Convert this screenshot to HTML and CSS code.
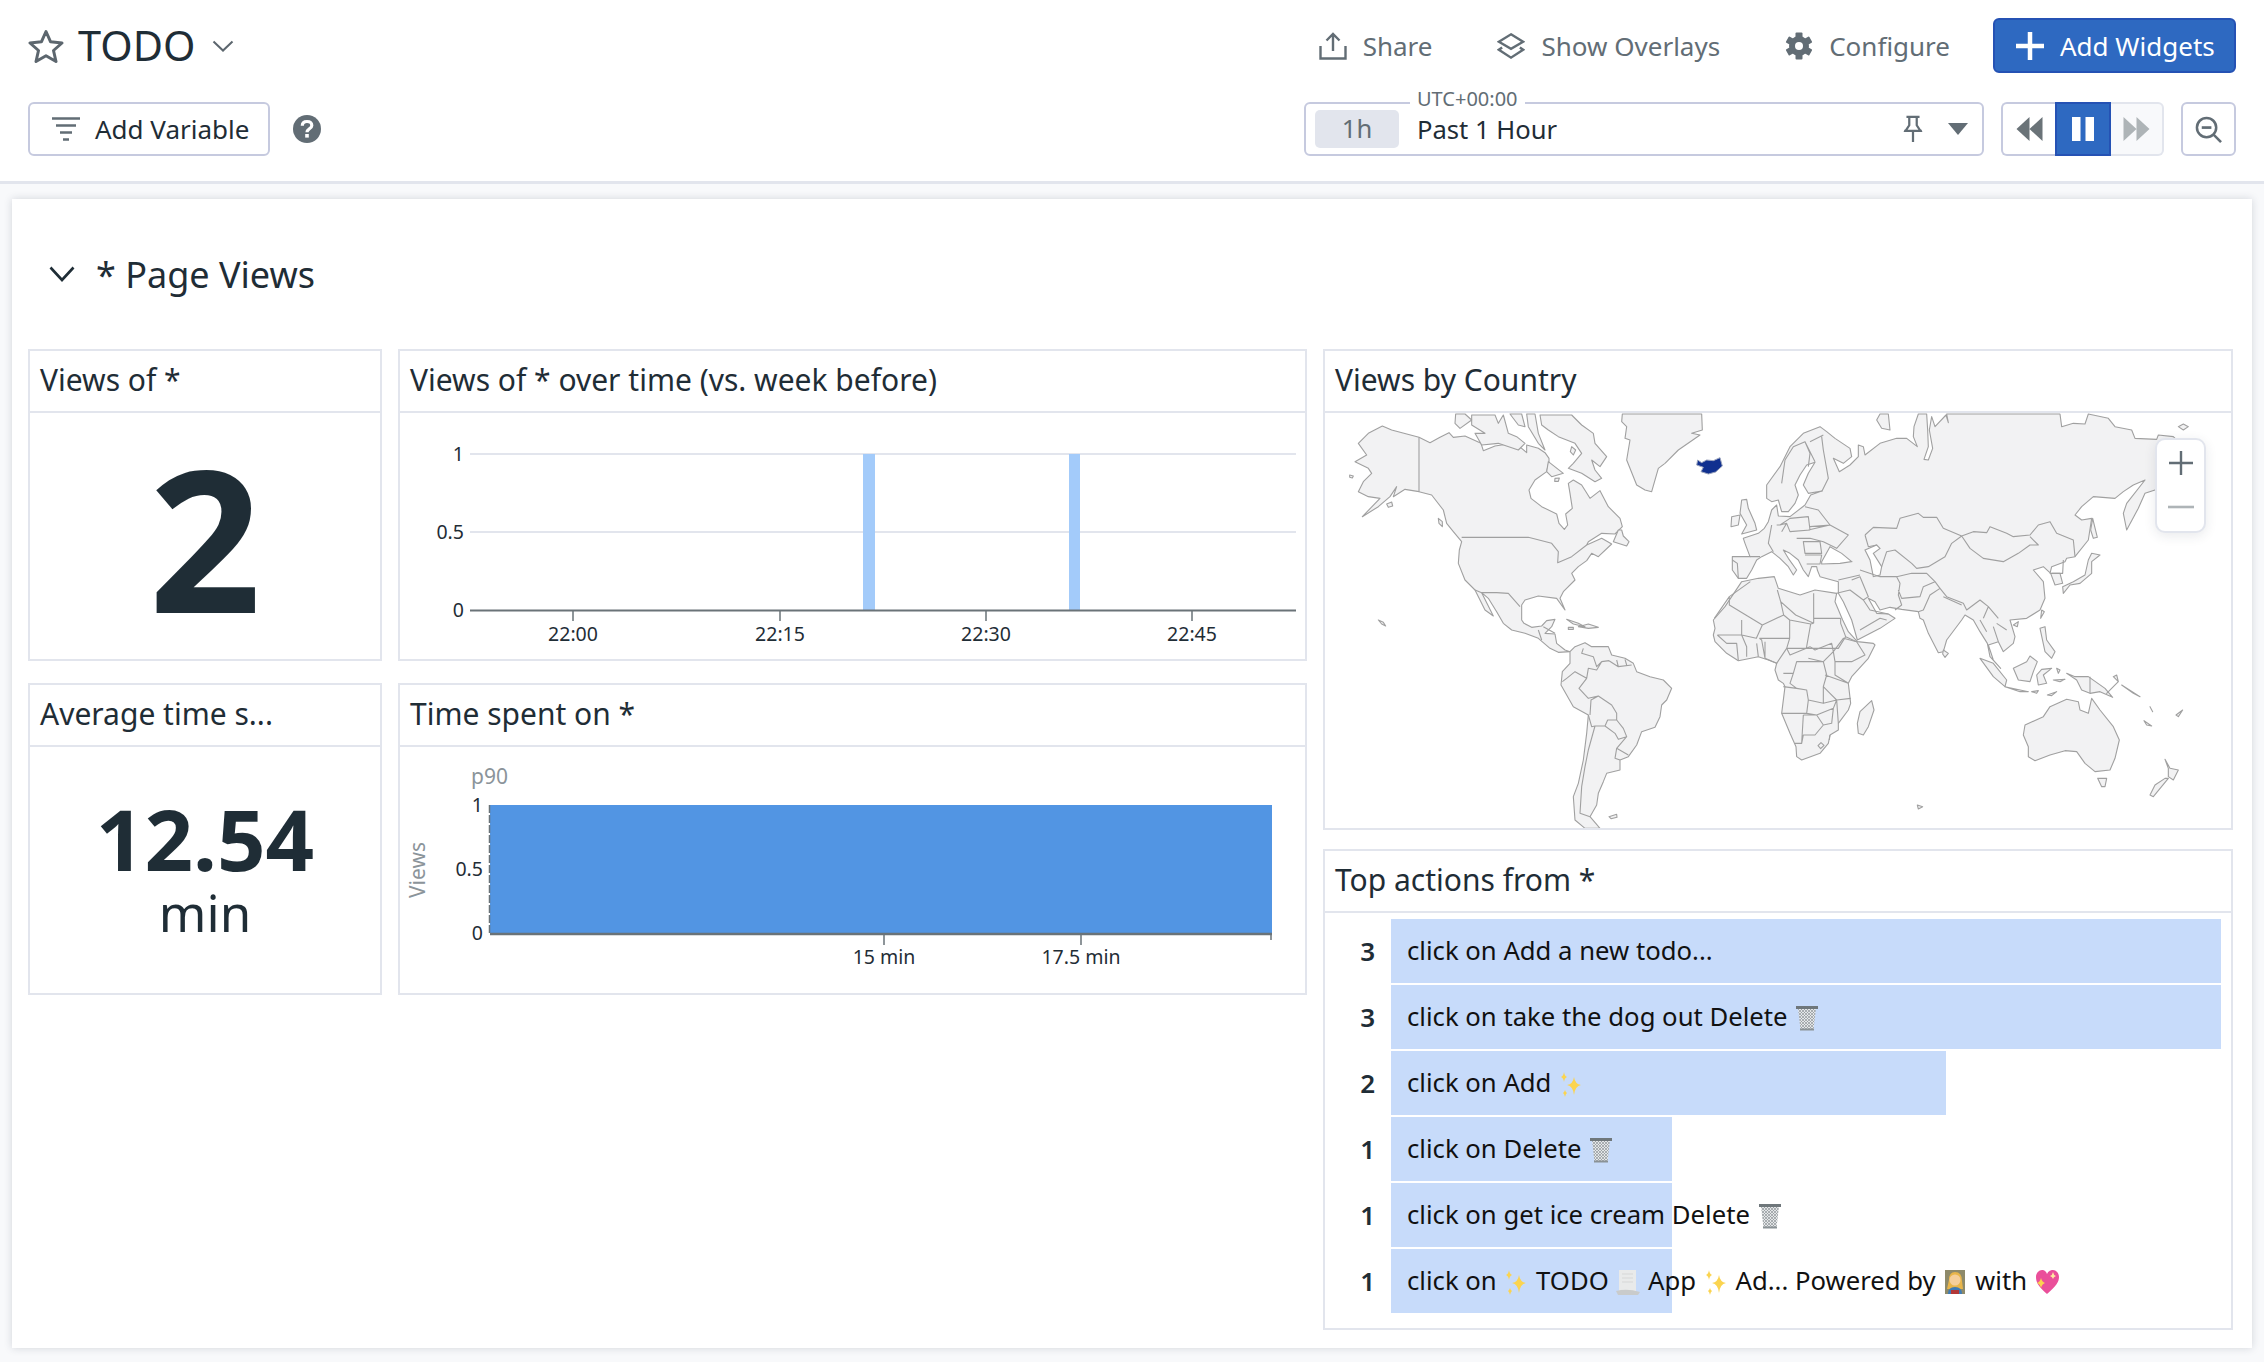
FILE: index.html
```html
<!DOCTYPE html>
<html lang="en">
<head>
<meta charset="utf-8">
<title>TODO</title>
<link rel="stylesheet" href="styles.css">
</head>
<body>
<svg class="defs" width="0" height="0" aria-hidden="true">
  <defs>
    <pattern id="mesh" width="3" height="3" patternUnits="userSpaceOnUse"><rect width="3" height="3" fill="#e4e6e8"/><path d="M0 0L3 3M3 0L0 3" stroke="#8f9699" stroke-width=".7"/></pattern>
    <symbol id="trash" viewBox="0 0 26 26"><path d="M4 3L6.500 25H19.500L22 3Z" fill="url(#mesh)"/><path d="M2 2.500H24" stroke="#6f777b" stroke-width="3"/><path d="M6 24.500H20" stroke="#8a9296" stroke-width="2"/></symbol>
    <symbol id="spark" viewBox="0 0 26 26"><path id="s1" d="M16 6Q17 13 23 14Q17 15 16 24Q15 15 9 14Q15 13 16 6Z" fill="#fbd44f"/><path d="M6 1Q6.500 5 9 6Q6.500 7 6 11Q5.500 7 3 6Q5.500 5 6 1Z" fill="#fbd44f"/><path d="M7 19Q7.500 21 9 22Q7.500 23 7 26Q6.500 23 5 22Q6.500 21 7 19Z" fill="#fbd44f"/></symbol>
    <symbol id="scroll" viewBox="0 0 26 26"><path d="M4 1H21V22H4Z" fill="#e9eaea"/><path d="M1 22Q12 19 25 23L23 26H3Z" fill="#c9cbcb"/><path d="M7 5H18M7 9H18M7 13H18" stroke="#d6d7d7"/></symbol>
    <symbol id="woman" viewBox="0 0 26 26"><rect x="3" y="1" width="20" height="24" fill="#8e8a6a"/><path d="M7 11Q7 3 13 3Q20 3 20 12L21 20H5Z" fill="#e8b54a"/><circle cx="13" cy="11" r="5.500" fill="#f6cf9a"/><path d="M6 25Q6 18 13 18Q20 18 20 25Z" fill="#3f7bb6"/><rect x="9" y="21" width="8" height="4" fill="#b23838"/></symbol>
    <symbol id="heart" viewBox="0 0 26 26"><path d="M13 25C4 17 2 13 2 8C2 4 5 1 8 1C10 1 12 2 13 5C14 2 17 1 19 1C22 1 25 4 25 8C25 13 22 17 13 25Z" fill="#ea4f9a"/><path d="M7 9Q8 13 11 14Q8 15 7 19Q6 15 3 14Q6 13 7 9Z" fill="#fbd44f"/><path d="M19 3Q19.500 6 22 7Q19.500 8 19 10Q18.500 8 16 7Q18.500 6 19 3Z" fill="#ffe9a0"/></symbol>
  </defs>
</svg>

<header class="topbar">
  <div class="toprow">
    <div class="titlegroup">
      <svg class="ico-star" viewBox="0 0 36 34"><path d="M18 2.500L22.600 12.800L34 14L25.500 21.500L28 32.500L18 26.800L8 32.500L10.500 21.500L2 14L13.400 12.800Z" fill="none" stroke="#5c666e" stroke-width="3" stroke-linejoin="round"/></svg>
      <h1 class="dashname">TODO</h1>
      <svg class="ico-chev" viewBox="0 0 22 12"><path d="M1.500 1.500L11 10.500L20.500 1.500" fill="none" stroke="#5c666e" stroke-width="2"/></svg>
    </div>
    <div class="actions">
      <div class="action">
        <svg class="ico" viewBox="0 0 28 28"><path d="M14 19V2M7.500 8.500L14 2L20.500 8.500M1.500 14V26.500H26.500V14" fill="none" stroke="#626d75" stroke-width="2.400"/></svg>
        <span>Share</span>
      </div>
      <div class="action gap-l">
        <svg class="ico" viewBox="0 0 30 28"><path d="M15 1.500L28 9.500L15 17L2 9.500Z" fill="none" stroke="#626d75" stroke-width="2.600"/><path d="M5.500 15.500L2 18L15 26.500L28 18L24.500 15.500" fill="none" stroke="#626d75" stroke-width="2.600"/></svg>
        <span>Show Overlays</span>
      </div>
      <div class="action gap-l">
        <svg class="ico" viewBox="0 0 28 28"><g fill="#626d75" transform="translate(14 14)"><circle r="10"/><rect x="-3.500" y="-13.500" width="7" height="27" rx="1"/><rect x="-3.500" y="-13.500" width="7" height="27" rx="1" transform="rotate(60)"/><rect x="-3.500" y="-13.500" width="7" height="27" rx="1" transform="rotate(120)"/></g><circle cx="14" cy="14" r="4" fill="#fff"/></svg>
        <span>Configure</span>
      </div>
      <button class="btn-primary" type="button">
        <svg class="ico-plus" viewBox="0 0 28 28"><path d="M14 0V28M0 14H28" stroke="#fff" stroke-width="4.500"/></svg>
        <span>Add Widgets</span>
      </button>
    </div>
  </div>
  <div class="toprow second">
    <div class="vargroup">
      <button class="btn-outline" type="button">
        <svg class="ico-filter" viewBox="0 0 28 24"><path d="M0 1.500H28M4 8.500H24M8 15.500H20M11 22.500H17" stroke="#626d75" stroke-width="2.400"/></svg>
        <span>Add Variable</span>
      </button>
      <svg class="ico-help" viewBox="0 0 28 28"><circle cx="14" cy="14" r="14" fill="#626d75"/><path d="M9.300 10.800C9.300 8 11.300 6.500 14 6.500C16.800 6.500 18.800 8 18.800 10.500C18.800 13.800 14 13.800 14 17.200" fill="none" stroke="#fff" stroke-width="3.200"/><rect x="12.200" y="19" width="3.600" height="3.600" fill="#fff"/></svg>
    </div>
    <div class="timegroup">
      <div class="picker">
        <span class="utc">UTC+00:00</span>
        <span class="chip">1h</span>
        <span class="range">Past 1 Hour</span>
        <svg class="ico-pin" viewBox="0 0 24 30"><path d="M5 2H19M8 2V11L4 17H20L16 11V2M12 17V29M2.500 17H21.500" fill="none" stroke="#626d75" stroke-width="2.400"/></svg>
        <svg class="ico-caret" viewBox="0 0 20 12"><path d="M0 0H20L10 12Z" fill="#626d75"/></svg>
      </div>
      <div class="playback">
        <span class="pb pb-back"><svg viewBox="0 0 26 26"><path d="M13 1V25L0 13ZM26 1V25L13 13Z" fill="#6a7378"/></svg></span>
        <span class="pb pb-pause"><svg viewBox="0 0 24 26"><path d="M1 1H9.500V25H1ZM14.500 1H23V25H14.500Z" fill="#fff"/></svg></span>
        <span class="pb pb-fwd"><svg viewBox="0 0 26 26"><path d="M0 1L13 13L0 25ZM13 1L26 13L13 25Z" fill="#aeb4b7"/></svg></span>
      </div>
      <span class="zoomout"><svg viewBox="0 0 28 28"><circle cx="12" cy="12" r="10" fill="none" stroke="#626d75" stroke-width="2.600"/><path d="M7 12H17" stroke="#626d75" stroke-width="2.800"/><path d="M19 19L27 27" stroke="#626d75" stroke-width="2.600"/></svg></span>
    </div>
  </div>
</header>

<main class="board">
  <div class="section-head">
    <svg class="ico-sec" viewBox="0 0 26 16"><path d="M1.500 1.500L13 14L24.500 1.500" fill="none" stroke="#1f2d36" stroke-width="2.600"/></svg>
    <h2>* Page Views</h2>
  </div>
  <div class="grid">
    <div class="leftgrid">
      <section class="widget">
        <h3 class="wtitle">Views of *</h3>
        <div class="wbody center"><span class="bignum">2</span></div>
      </section>
      <section class="widget">
        <h3 class="wtitle">Views of * over time (vs. week before)</h3>
        <div class="wbody">
          <svg class="chart" viewBox="0 0 905 246">
            <g class="grid-l"><path d="M70 41H896M70 119H896"/></g>
            <rect x="463" y="41" width="12" height="156" fill="#a3cbfa"/>
            <rect x="669" y="41" width="11" height="156" fill="#a3cbfa"/>
            <path d="M70 197.500H896" stroke="#6a7378" stroke-width="2"/>
            <path d="M173 198V208M380 198V208M586 198V208M792 198V208" stroke="#6a7378" stroke-width="1.500"/>
            <g class="tick" text-anchor="end"><text x="64" y="48">1</text><text x="64" y="126">0.5</text><text x="64" y="204">0</text></g>
            <g class="tick" text-anchor="middle"><text x="173" y="228">22:00</text><text x="380" y="228">22:15</text><text x="586" y="228">22:30</text><text x="792" y="228">22:45</text></g>
          </svg>
        </div>
      </section>
      <section class="widget">
        <h3 class="wtitle">Average time s...</h3>
        <div class="wbody numcol"><span class="midnum">12.54</span><span class="unit">min</span></div>
      </section>
      <section class="widget">
        <h3 class="wtitle">Time spent on *</h3>
        <div class="wbody">
          <svg class="chart" viewBox="0 0 905 246">
            <rect x="90" y="58" width="782" height="128" fill="#5295e3"/>
            <path d="M89.500 58V188" stroke="#6a7378" stroke-width="1.500" stroke-dasharray="8 2"/>
            <path d="M90 187H872" stroke="#6a7378" stroke-width="2.500"/>
            <path d="M484 188V198M681 188V198M871 188V193" stroke="#6a7378" stroke-width="1.500"/>
            <text class="tick muted big" x="71" y="37">p90</text>
            <g class="tick" text-anchor="end"><text x="83" y="65">1</text><text x="83" y="129">0.5</text><text x="83" y="193">0</text></g>
            <g class="tick" text-anchor="middle"><text x="484" y="217">15 min</text><text x="681" y="217">17.5 min</text></g>
            <text class="tick muted big" text-anchor="middle" transform="translate(25 123) rotate(-90)">Views</text>
          </svg>
        </div>
      </section>
    </div>
    <div class="rightcol">
      <section class="widget fill">
        <h3 class="wtitle">Views by Country</h3>
        <div class="wbody mapbody">
          <svg class="map" viewBox="0 9 2718 1245" preserveAspectRatio="none">
            <g class="land">
              <path d="M100 100L130 70 172 48 200 60 282 82 315 98 345 82 372 68 385 82 420 78 468 100 475 122 510 108 560 100 590 115 605 128 605 105 640 115 660 128 672 145 672 155 665 185 630 210 612 240 618 265 650 290 695 312 702 340 718 358 728 345 722 312 742 295 735 250 730 220 745 210 770 225 795 265 825 242 850 290 885 325 892 350 870 372 830 370 790 395 785 405 830 385 860 402 820 440 800 430 785 452 760 470 740 490 750 510 715 545 705 565 720 600 695 565 640 558 600 570 590 585 590 630 597 640 620 652 650 648 665 632 690 628 680 650 660 670 690 672 695 700 720 720 735 725 700 727 675 715 640 685 600 670 560 660 535 640 515 605 490 565 470 548 505 618 480 600 450 540 420 510 400 460 403 420 410 395 385 365 365 340 355 300 320 255 282 245 240 238 205 260 215 230 195 260 160 290 112 320 165 265 130 260 100 245 115 215 140 190 130 175 90 155 125 135Z"/>
              <path d="M645 15H740L770 45 805 70 810 100 845 140 825 170 800 150 810 180 830 205 810 215 770 190 730 175 745 160 770 130 750 100 700 80 670 60 650 45Z"/>
              <path d="M440 15H510L520 40 535 15 550 70 575 80 600 100 580 120 520 100 470 105 450 70 480 70 440 45Z"/>
              <path d="M392 12H420L440 30 405 55 390 40Z"/>
              <path d="M555 12H590L600 50 580 45Z"/>
              <path d="M605 12H630L640 70 660 120 640 100 610 50Z"/>
              <path d="M670 155L715 190 680 200 665 185Z"/>
              <path d="M690 205L703 204 700 214 689 214Z"/>
              <path d="M740 110L752 120 745 135 736 125Z"/>
              <path d="M892 12H1130L1132 60 1100 70 1125 75 1060 120 1020 160 1000 175 980 245 960 240 935 225 905 150 915 90 900 85 905 50 890 35Z"/>
              <path d="M865 395L880 360 890 360 895 378 912 395 905 408Z"/>
              <path d="M340 325L352 335 352 350 342 340Z"/>
              <path d="M185 282L200 276 203 288 190 292Z"/>
              <path d="M74 195L85 198 82 204 74 202Z"/>
              <path d="M725 628L760 640 780 650 745 642ZM760 650L790 642 820 652 790 655ZM730 652H745V658H730Z"/>
              <path d="M160 630L175 637 182 648 170 642Z"/>
              <path d="M1250 270L1265 268 1270 295 1290 340 1295 360 1250 372 1265 345 1245 310Z"/>
              <path d="M1220 320L1245 315 1240 345 1218 350Z"/>
            </g>
            <path class="iceland" d="M1118 150L1130 158 1145 150 1165 152 1185 143 1192 168 1172 186 1150 192 1128 185 1135 172 1115 165Z"/>
            <g class="border">
              <path d="M282 82V245M410 382H610L680 400 700 425 698 458 740 440 785 405M450 540L470 548 515 548 550 550 585 590M640 660L650 690M655 650L690 670"/>
            </g>
            <g transform="translate(0 630)">
              <g class="land">
                <path d="M735 95L750 80 780 68 800 80 850 80 860 105 900 115 925 130 935 155 975 170 1015 180 1040 205 1025 240 1010 255 1005 290 990 322 950 335 935 375 910 410 885 420 885 450 845 460 835 485 820 520 815 555 795 590 825 625 780 625 750 600 745 530 760 490 775 420 785 340 790 285 745 260 708 195 712 155 735 130Z"/>
                <path d="M852 590L875 583 876 592 858 596Z"/>
              </g>
              <g class="border">
                <path d="M712 185L725 175 750 155 785 175M785 175L762 205 790 235 820 228 798 240 795 285M785 175L790 145 815 150 830 125 852 122M775 85L770 100 805 110 815 140 830 125M852 122L880 140 920 135M875 120L880 140M900 118L905 135M820 228L860 255 875 280 875 300 848 300 840 318 810 318 800 320 790 285M848 300L840 318 870 340 880 358 905 350 895 325 875 300M810 318L790 390 780 440 770 500 765 580 795 590M905 350L875 385 910 405M875 385L870 415 885 420M870 340L880 358"/>
              </g>
            </g>
            <g transform="translate(1365 0)">
              <g class="land">
                <path d="M-143 480L-143 440 -90 440 -105 400 -110 385 -65 370 -47 355 -35 335 -25 300 -10 285 -5 318 30 320 75 285 92 255 125 243 85 250 70 225 85 190 105 157 80 165 60 195 45 225 55 255 45 280 25 305 5 305 -5 270 -25 275 -40 265 -40 225 0 170 30 110 70 70 120 50 140 65 165 85 210 115 215 140 190 160 160 145 178 185 210 165 235 140 235 105 250 110 255 135 300 100 350 85 380 85 412 110 400 80 402 50 415 12 440 12 443 60 445 110 432 148 445 150 458 115 448 60 455 20 465 50 498 15 505 38 500 12H840L845 50 880 40 915 42 925 12 985 25 1005 50 1055 60 1065 85 1130 88 1135 75 1180 80 1200 100 1200 160 1125 240 1095 250 1075 295 1040 360 1030 310 1040 280 1095 210 1060 225 1030 245 1005 265 940 260 905 290 885 315 905 330 935 325 925 390 885 440 860 445 855 455 815 470 810 490 840 490 848 520 825 525 812 490 790 470 760 480 790 515 795 565 780 600 740 625 690 630 705 680 700 700 670 725 655 695 625 705 640 750 662 775 630 740 622 700 600 665 580 630 555 615 545 630 500 690 490 725 475 728 445 670 430 630 420 625 415 605 365 598 330 592 300 600 285 575 265 565 290 610 325 612 345 625 300 655 232 690 215 630 190 575 175 550 175 515 120 500 112 480 110 470 95 470 85 500 70 480 55 450 30 430 10 420 25 445 50 480 40 495 25 470 0 445 -25 425 -55 440 -70 450 -85 480 -100 505 -125 505Z"/>
                <path d="M-115 515L-65 505 -17 500 -5 535 60 555 105 540 170 550 165 575 188 630 205 665 232 695 280 700 285 705 265 745 215 800 205 820 212 880 205 900 175 940 175 960 150 975 145 1000 120 1030 65 1050 50 1040 48 1010 30 970 5 910 15 830 10 820 -5 810 -15 780 -10 760 -35 750 -65 740 -125 752 -160 730 -195 695 -200 675 -195 655 -200 630 -165 590Z"/>
                <path d="M275 872L282 900 265 950 250 975 235 970 232 940 240 905Z"/>
                <path d="M290 30L300 12H325L330 60 305 55Z"/>
                <path d="M938 325L952 382 940 385 932 360Z"/>
                <path d="M935 430L960 435 935 455 935 490 900 520 870 525 850 550 848 530 880 515 915 495 925 450Z"/>
                <path d="M785 600L793 605 782 625Z"/>
                <path d="M1195 50L1210 42 1225 50 1210 60Z"/>
                <path d="M490 720L505 730 495 742 488 732Z"/>
                <path d="M700 645L715 635 712 650Z"/>
                <path d="M780 655L795 650 800 690 825 725 815 745 795 725Z"/>
                <path d="M600 745L640 760 680 810 675 830 640 800Z"/>
                <path d="M675 830L745 845 720 845Z"/>
                <path d="M700 775L740 755 750 738 772 755 760 785 750 815 715 810Z"/>
                <path d="M770 795L785 778 815 775 790 795 800 820 775 825Z"/>
                <path d="M860 790L885 800 925 800 975 835 998 862 960 845 930 850 905 840 890 810Z"/>
                <path d="M755 845L775 842 770 850ZM802 855L830 845 815 857ZM820 810L855 808 840 815ZM830 775L840 780 835 790ZM1025 825L1080 860 1060 850ZM1110 890L1118 905ZM1188 915L1208 900 1195 920ZM1092 932L1115 948 1100 945ZM980 850L1015 815 1000 800 1010 795 1015 815Z"/>
                <path d="M735 945L790 920 810 890 860 868 895 875 900 900 925 910 935 865 960 900 1000 950 1018 990 1005 1045 990 1080 945 1085 915 1060 890 1025 855 1022 810 1035 765 1052 745 1040 745 1010 730 975Z"/>
                <path d="M953 1105L980 1105 975 1130 965 1130Z"/>
                <path d="M1155 1048L1170 1075 1195 1080 1180 1110 1165 1100 1165 1075Z"/>
                <path d="M1165 1105L1120 1160 1110 1155 1125 1125 1155 1105Z"/>
                <path d="M412 1185L428 1190 415 1197Z"/>
                <path d="M123 998L132 1006 122 1016 114 1007Z"/>
              </g>
              <g class="sea">
                <path d="M125 455L150 410 185 430 215 455 180 460 125 462Z"/>
                <path d="M255 420L290 405 300 415 280 430 305 470 300 495 280 500 270 450Z"/>
              </g>
              <g class="border">
                <path d="M255 375L280 352 350 355 360 325 415 310 430 322 470 322 490 355 545 378 580 365 620 368 630 350 680 370 700 380 750 375 775 345 810 335 830 370 880 390 885 440M545 378L570 415 610 445 670 455 715 430 750 405 775 405 750 380M545 378L515 400 495 440 445 470M255 375L265 410 290 405M305 470L320 425 345 420 395 460 410 475 445 470M240 480L300 500 350 500 360 520 355 555 365 585 345 600M350 500L395 490 440 490 465 515 430 530 420 560 365 565 355 540M465 515L480 535 450 555 430 600 415 605M480 535L500 560 550 580 560 600 600 570 625 590 610 625M490 560L545 585M625 590L655 625M815 490L848 490 850 450"/>
                <path d="M0 345L30 325 85 320 90 360 30 365 20 340ZM85 360L150 345 205 375 170 415 130 395 90 385 50 385M75 290L115 300 150 345 90 350M70 395L120 395 125 430 75 430ZM75 435H125L120 462 80 462M-10 345L0 345M-25 345L-35 400 -20 425M-90 440L-60 440M5 365L20 340M-143 450L-128 460 -125 505M5 220L15 150 40 110 75 95 90 130 85 170M75 95L105 155M90 95L130 75M125 80L130 120 145 205 125 245"/>
                <path d="M175 510L240 495M215 510L240 500 265 560 250 570 210 540 170 550M210 540L250 570 270 600 325 612M240 660L300 625 320 630"/>
                <path d="M101 625H182M101 550V640M-8 540L2 575 47 615 101 640M-89 515L-152 560 -197 625M-152 560V585L-53 645 11 615 2 575M-115 630V675H-188M-53 645L-71 685 -115 675M11 615L29 630V685H-62M29 630L92 642 79 715 20 715 29 685M92 642L101 640M182 625V640L197 680 175 715 79 715M197 680L230 695M-188 675L-160 700-130 700-125 752M-115 675L-100 710-100 740M-70 700L-65 740M-45 695V745M-62 685L-55 690-45 745-10 760M20 715L-10 760"/>
                <path d="M160 725L190 685 230 695 255 735 215 755 165 755ZM90 710L105 720 155 700 160 725 130 755 85 745M20 715L30 735 90 710M50 755H130L140 795 130 830V880L85 870 80 840 50 835 30 820 40 790ZM165 755V795L205 820M135 795L205 820M130 830L150 850 170 870 212 865M10 830L50 835 80 840 85 870 80 910 5 910M85 870L130 880 170 870 160 895 110 915 80 910M70 915L65 1000 45 1000M70 915H110L130 945 105 975 70 975 65 1000M160 895L155 940 130 945M170 870L175 940M150 975L148 990M40 790H10"/>
                <path d="M930 800V850"/>
                <path d="M600 630L620 665M640 650L655 695M650 640L680 660"/>
              </g>
            </g>
          </svg>
          <div class="mapzoom">
            <svg class="mz" viewBox="0 0 26 26"><path d="M13 1V25M1 13H25" stroke="#626d75" stroke-width="2.400"/></svg>
            <svg class="mz mz-min" viewBox="0 0 26 4"><path d="M0 2H26" stroke="#aeb4b7" stroke-width="2.600"/></svg>
          </div>
        </div>
      </section>
      <section class="widget fill">
        <h3 class="wtitle">Top actions from *</h3>
        <div class="wbody toplist">
          <div class="row"><span class="val">3</span><div class="track"><span class="fillbar" style="width:100%"></span><span class="lab">click on Add a new todo...</span></div></div>
          <div class="row"><span class="val">3</span><div class="track"><span class="fillbar" style="width:100%"></span><span class="lab">click on take the dog out Delete <svg class="emo"><use href="#trash"/></svg></span></div></div>
          <div class="row"><span class="val">2</span><div class="track"><span class="fillbar" style="width:66.9%"></span><span class="lab">click on Add <svg class="emo"><use href="#spark"/></svg></span></div></div>
          <div class="row"><span class="val">1</span><div class="track"><span class="fillbar" style="width:33.9%"></span><span class="lab">click on Delete <svg class="emo"><use href="#trash"/></svg></span></div></div>
          <div class="row"><span class="val">1</span><div class="track"><span class="fillbar" style="width:33.9%"></span><span class="lab">click on get ice cream Delete <svg class="emo"><use href="#trash"/></svg></span></div></div>
          <div class="row"><span class="val">1</span><div class="track"><span class="fillbar" style="width:33.9%"></span><span class="lab">click on <svg class="emo"><use href="#spark"/></svg> TODO <svg class="emo"><use href="#scroll"/></svg> App <svg class="emo"><use href="#spark"/></svg> Ad... Powered by <svg class="emo"><use href="#woman"/></svg> with <svg class="emo"><use href="#heart"/></svg></span></div></div>
        </div>
      </section>
    </div>
  </div>
</main>
</body>
</html>
```
FILE: styles.css
```css
* { box-sizing: border-box; }
html, body { margin: 0; height: 100%; }
body {
  background: #f8f9fb;
  color: #1f2d36;
  font-family: "Noto Sans", "Open Sans", sans-serif;
  overflow: hidden;
}
.defs { position: absolute; }
svg { display: block; flex: none; }

.topbar {
  height: 184px;
  padding: 18px 28px 0;
  background: #fff;
  border-bottom: 3px solid #e2e5ed;
}
.toprow { display: flex; justify-content: space-between; align-items: center; height: 55px; }
.toprow.second { margin-top: 29px; height: 54px; }
.titlegroup { display: flex; align-items: center; }
.ico-star { width: 36px; height: 34px; }
.dashname { margin: 0 0 0 14px; font-size: 41.500px; font-weight: 400; line-height: 55px; }
.ico-chev { width: 22px; height: 12px; margin-left: 17px; }
.actions { display: flex; align-items: center; }
.action { display: flex; align-items: center; gap: 16px; font-size: 26px; color: #626d75; }
.gap-l { margin-left: 65px; }
.ico { width: 28px; height: 28px; }
.btn-primary {
  display: flex; align-items: center; gap: 16px;
  height: 55px; width: 243px; margin-left: 43px; padding: 0 0 0 21px;
  background: #2e69c1; border: 2px solid #2552b4; border-radius: 6px;
  color: #fff; font: 400 26px "Noto Sans", sans-serif;
}
.ico-plus { width: 28px; height: 28px; }
.vargroup { display: flex; align-items: center; gap: 23px; }
.btn-outline {
  display: flex; align-items: center; gap: 15px;
  height: 54px; width: 242px; padding: 0 0 0 22px;
  background: #fff; border: 2px solid #c6cadf; border-radius: 6px;
  color: #1f2d36; font: 400 26px "Noto Sans", sans-serif;
}
.ico-filter { width: 28px; height: 24px; }
.ico-help { width: 28px; height: 28px; }
.timegroup { display: flex; align-items: center; }
.picker {
  position: relative;
  display: flex; align-items: center;
  width: 680px; height: 54px; padding-left: 9px;
  border: 2px solid #c6cadf; border-radius: 6px;
  font-size: 25.600px;
}
.utc {
  position: absolute; left: 104px; top: -17px;
  padding: 0 7px; background: #fff;
  font-size: 20px; line-height: 24px; color: #626d75;
}
.chip {
  width: 84px; height: 38px; line-height: 38px; text-align: center;
  background: #e2e5ed; border-radius: 5px; color: #626d75;
}
.range { margin-left: 18px; flex: 1; }
.ico-pin { width: 24px; height: 28px; }
.ico-caret { width: 20px; height: 12px; margin: 0 14px 0 23px; }
.playback { display: flex; margin-left: 17px; height: 54px; }
.pb { display: flex; align-items: center; justify-content: center; border: 2px solid #c6cadf; }
.pb-back { width: 54px; border-right: 0; border-radius: 6px 0 0 6px; }
.pb-back svg { width: 27px; height: 26px; }
.pb-pause { width: 56px; background: #2e69c1; border-color: #2552b4; }
.pb-pause svg { width: 24px; height: 26px; }
.pb-fwd { width: 53px; background: #f8f9fb; border-color: #e2e5ed; border-left: 0; border-radius: 0 6px 6px 0; }
.pb-fwd svg { width: 27px; height: 26px; }
.zoomout {
  display: flex; align-items: center; justify-content: center;
  width: 55px; height: 54px; margin-left: 17px;
  border: 2px solid #c6cadf; border-radius: 6px;
}
.zoomout svg { width: 27px; height: 27px; }

.board {
  height: 1149px;
  margin: 15px 12px 0;
  padding: 0 19px 0 16px;
  background: #fff;
  box-shadow: 0 0 8px rgba(40, 50, 70, .18);
}
.section-head { display: flex; align-items: center; height: 150px; padding: 0 0 0 21px; }
.ico-sec { width: 26px; height: 16px; }
.section-head h2 { margin: 0 0 0 21px; font-size: 36px; font-weight: 400; }

.grid { display: flex; gap: 16px; align-items: flex-start; }
.leftgrid {
  display: grid; grid-template-columns: 354px 909px; grid-template-rows: 312px 312px;
  column-gap: 16px; row-gap: 22px;
}
.rightcol { display: flex; flex-direction: column; gap: 19px; width: 910px; }
.widget {
  display: flex; flex-direction: column;
  border: 2px solid #e2e5ed; background: #fff; min-width: 0;
}
.widget.fill { height: 481px; }
.wtitle {
  flex: none; margin: 0; height: 62px; padding: 0 0 0 10px;
  border-bottom: 2px solid #e2e5ed;
  font-size: 30px; font-weight: 400; line-height: 58px; white-space: nowrap;
}
.wbody { flex: 1; min-height: 0; }
.center { display: flex; align-items: center; justify-content: center; }
.numcol { display: flex; flex-direction: column; align-items: center; padding-top: 49px; }
.bignum { font-size: 197px; font-weight: 700; line-height: 1; }
.midnum { font-size: 85px; font-weight: 700; line-height: 85px; }
.unit { font-size: 51px; line-height: 50px; margin-top: 6px; }
.chart { width: 100%; height: 100%; }
.grid-l path { stroke: #e2e5ed; stroke-width: 2; fill: none; }
.tick { font-size: 19.500px; fill: #1f2d36; }
.tick.muted { fill: #8b949a; }
.tick.big { font-size: 21px; }

.mapbody { position: relative; }
.map { width: 100%; height: 100%; }
.land path { fill: #f2f2f3; stroke: #a0a0a0; stroke-width: 1.100px; vector-effect: non-scaling-stroke; stroke-linejoin: round; }
.sea path { fill: #fff; stroke: #a0a0a0; stroke-width: 1.100px; vector-effect: non-scaling-stroke; }
.border path { fill: none; stroke: #a0a0a0; stroke-width: 1.100px; vector-effect: non-scaling-stroke; stroke-linejoin: round; }
.iceland { fill: #10308f; stroke: #9aa3bd; stroke-width: 1px; vector-effect: non-scaling-stroke; }
.mapzoom {
  position: absolute; right: 25px; top: 25px;
  display: flex; flex-direction: column; align-items: center;
  width: 51px; height: 95px; padding-top: 10px;
  background: #fff; border: 2px solid #e2e5ed; border-radius: 10px;
  box-shadow: 0 3px 12px rgba(40, 50, 70, .10);
}
.mz { width: 26px; }
.mz-min { margin-top: 29px; }
.toplist { padding: 6px 10px 0 0; display: flex; flex-direction: column; gap: 2px; }
.row { display: flex; height: 64px; }
.val { width: 66px; flex: none; padding-right: 16px; text-align: right; font-size: 26px; font-weight: 600; line-height: 64px; }
.track { position: relative; flex: 1; }
.fillbar { position: absolute; left: 0; top: 0; bottom: 0; background: #c7dbfa; }
.lab { position: relative; display: block; height: 64px; padding-left: 16px; font-size: 25.700px; line-height: 63px; color: #111; white-space: pre; }
.emo { display: inline-block; width: 26px; height: 26px; vertical-align: -5px; }
```
